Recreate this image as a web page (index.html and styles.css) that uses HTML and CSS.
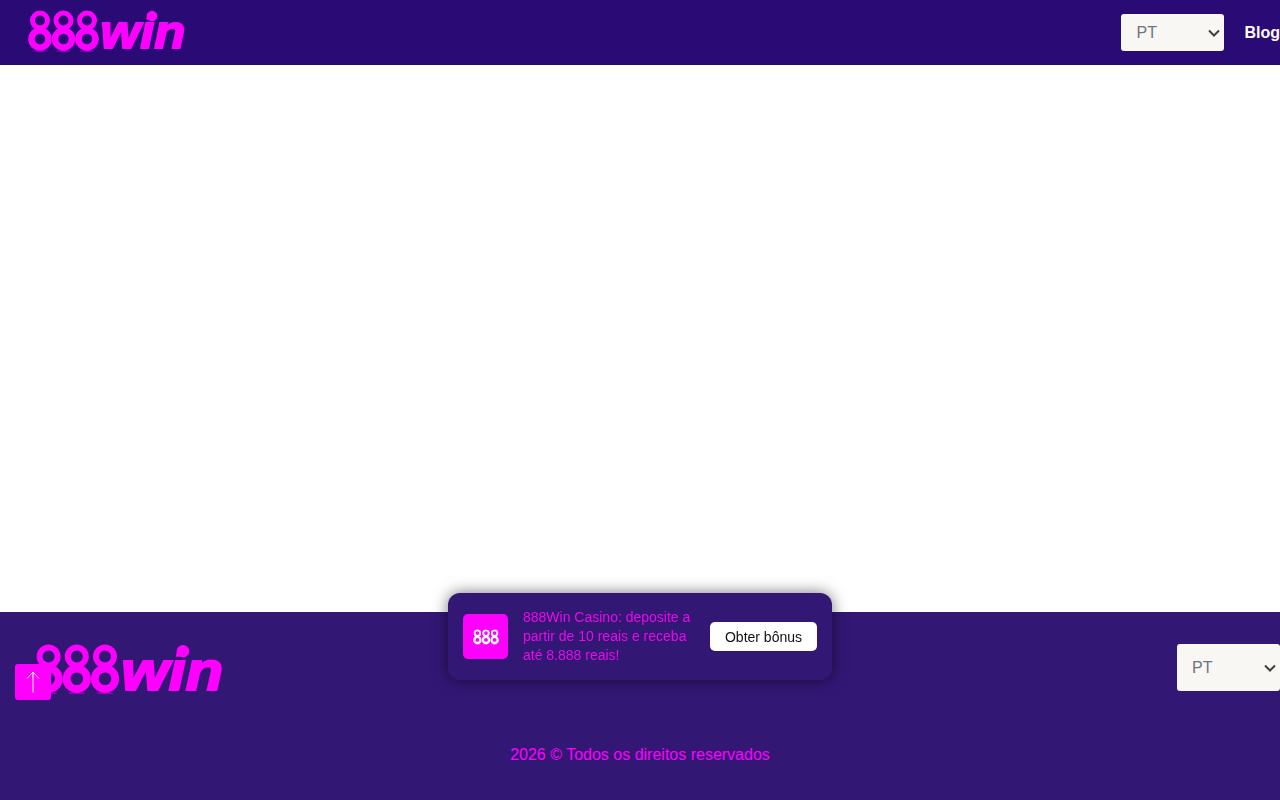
FILE: index.html
```html
<!DOCTYPE html>
<html lang="pt">
<head>
    <meta charset="UTF-8">
    <meta name="viewport" content="width=device-width, initial-scale=1.0">
    <title>888Win Casino</title>
    <link rel="stylesheet" href="styles.css">
</head>
<body>
    <svg class="sprite" aria-hidden="true">
        <symbol id="eight" viewBox="0 0 24 42">
            <ellipse cx="12" cy="41" rx="7" ry="1" fill="currentColor" opacity="0.45"/>
            <circle cx="12" cy="10.500" r="7.500" fill="none" stroke="currentColor" stroke-width="5"/>
            <circle cx="12" cy="29" r="8.500" fill="none" stroke="currentColor" stroke-width="6.500"/>
        </symbol>
        <symbol id="logo" viewBox="0 0 158 42">
            <use href="#eight" x="0" y="0" width="24" height="42"/>
            <use href="#eight" x="23.500" y="0" width="24" height="42"/>
            <use href="#eight" x="47" y="0" width="24" height="42"/>
            <text class="logo-win" x="72.500" y="38" textLength="85" lengthAdjust="spacingAndGlyphs">win</text>
            <circle cx="124" cy="6" r="5.200" fill="currentColor"/>
        </symbol>
    </svg>

    <header class="top-bar">
        <a class="logo" href="#"><svg class="logo-header"><use href="#logo"/></svg></a>
        <nav class="top-nav">
            <select class="lang-select">
                <option>PT</option>
                <option>EN</option>
            </select>
            <a class="blog-link" href="#">Blog</a>
        </nav>
    </header>

    <main class="content"></main>

    <footer class="site-footer">
        <div class="footer-row">
            <a class="logo" href="#"><svg class="logo-footer"><use href="#logo"/></svg></a>
            <select class="lang-select lang-select-big">
                <option>PT</option>
                <option>EN</option>
            </select>
        </div>
        <p class="copyright">2026 © Todos os direitos reservados</p>
    </footer>

    <div class="bonus-popup">
        <div class="bonus-icon">
            <svg class="bonus-eights" viewBox="0 0 71 42">
                <use href="#eight" x="0" y="0" width="24" height="42"/>
                <use href="#eight" x="23.500" y="0" width="24" height="42"/>
                <use href="#eight" x="47" y="0" width="24" height="42"/>
            </svg>
        </div>
        <p class="bonus-text">888Win Casino: deposite a partir de 10 reais e receba até 8.888 reais!</p>
        <button class="bonus-button">Obter bônus</button>
    </div>

    <button class="to-top" aria-label="Voltar ao topo">
        <svg width="14" height="22" viewBox="0 0 14 22">
            <path d="M7 21.500V1M1 7.500L7 1l6 6.500" fill="none" stroke="#fff" stroke-width="1"/>
        </svg>
    </button>
</body>
</html>
```

FILE: styles.css
```css
html, body {
    height: 100%;
    margin: 0;
    overflow: hidden;
}
body {
    font-family: 'Liberation Sans', Arial, sans-serif;
    display: flex;
    flex-direction: column;
    background: #ffffff;
    color: #ff00ff;
}
.sprite {
    display: none;
}
.logo {
    display: block;
    color: #ff00ff;
    line-height: 0;
}
.logo-win {
    font-family: 'Liberation Sans', Arial, sans-serif;
    font-size: 46px;
    font-weight: 700;
    font-style: italic;
    fill: currentColor;
    stroke: currentColor;
    stroke-width: 1.800px;
}
.logo-header {
    width: 158px;
    height: 42px;
    margin-bottom: 3px;
}
.logo-footer {
    width: 190px;
    height: 50.400px;
    filter: blur(0.5px);
}
.top-bar {
    flex: 0 0 65px;
    display: flex;
    justify-content: space-between;
    align-items: center;
    padding-left: 28px;
    background: #2a0a75;
    box-sizing: border-box;
}
.top-nav {
    display: flex;
    align-items: center;
    gap: 20px;
}
.lang-select {
    appearance: none;
    width: 103px;
    height: 37px;
    padding: 0 0 0 15px;
    border: none;
    border-radius: 3px;
    background-color: #f8f7f3;
    background-image: url("data:image/svg+xml,%3Csvg xmlns='http://www.w3.org/2000/svg' width='12' height='8' viewBox='0 0 12 8'%3E%3Cpath d='M1 1.500l5 5 5-5' fill='none' stroke='%23404040' stroke-width='2'/%3E%3C/svg%3E");
    background-repeat: no-repeat;
    background-position: right 4px center;
    color: #6c757d;
    font-family: inherit;
    font-size: 16px;
}
.lang-select-big {
    height: 47px;
}
.blog-link {
    color: #ffffff;
    font-size: 16px;
    font-weight: 700;
    text-decoration: none;
}
.content {
    flex: 1;
}
.site-footer {
    flex: 0 0 188px;
    box-sizing: border-box;
    padding: 32px 0 0 34px;
    background: #331775;
}
.footer-row {
    display: flex;
    justify-content: space-between;
    align-items: flex-start;
    height: 51px;
}
.copyright {
    margin: 50px 0 0 -34px;
    font-size: 16px;
    line-height: 20px;
    text-align: center;
}
.bonus-popup {
    position: fixed;
    left: 448px;
    bottom: 120px;
    width: 384px;
    height: 87px;
    box-sizing: border-box;
    display: flex;
    align-items: center;
    gap: 15px;
    padding: 0 15px;
    background: #331775;
    border-radius: 12px;
    box-shadow: 0 0 15px rgba(0, 0, 0, 0.55);
}
.bonus-icon {
    flex: 0 0 45px;
    height: 45px;
    display: flex;
    justify-content: center;
    align-items: center;
    background: #ff00ff;
    border-radius: 5px;
    color: #ffffff;
}
.bonus-eights {
    width: 26px;
    height: 18px;
}
.bonus-text {
    flex: 1;
    margin: 0;
    font-size: 14px;
    line-height: 19px;
    color: #e80ae8;
}
.bonus-button {
    flex: 0 0 107px;
    height: 29px;
    padding: 0;
    border: none;
    border-radius: 5px;
    background: #ffffff;
    color: #111111;
    font-family: inherit;
    font-size: 14px;
}
.to-top {
    position: fixed;
    left: 15px;
    bottom: 100px;
    width: 36px;
    height: 36px;
    display: flex;
    justify-content: center;
    align-items: center;
    padding: 0;
    border: none;
    border-radius: 3px;
    background: #ff00ff;
}
```
